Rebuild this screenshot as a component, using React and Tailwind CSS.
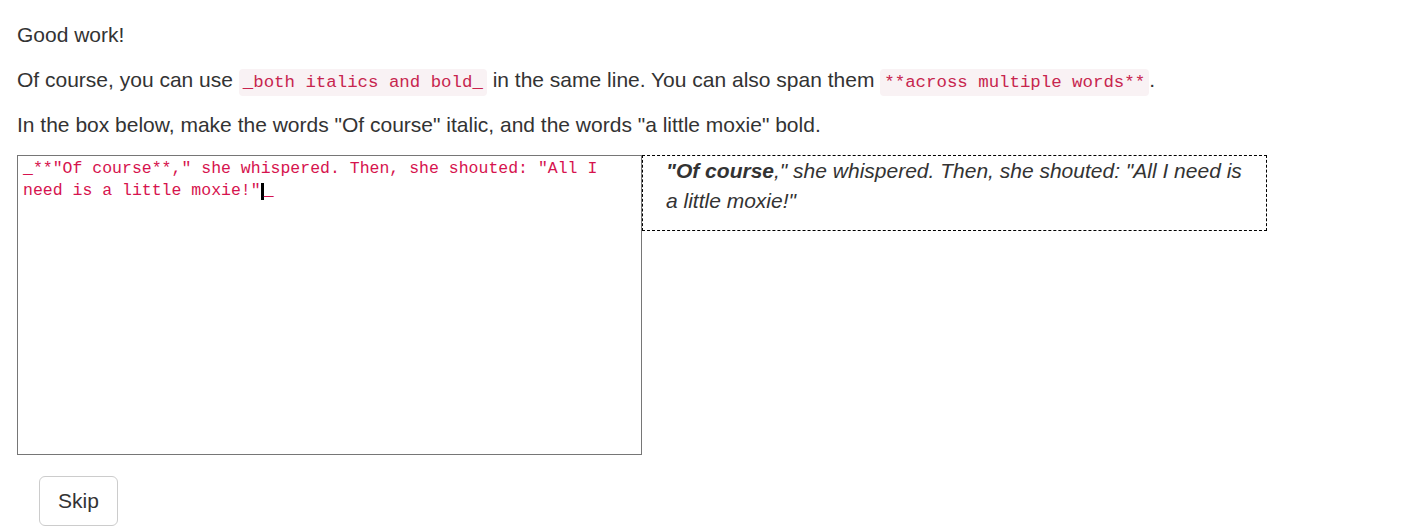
import React from 'react'

const Code = ({ children }) => (
  <code className="rounded-[4px] bg-[#f9f2f4] px-[4px] py-[4px] text-[17.4px] leading-none text-[#c7254e] [font-family:'Liberation_Mono',monospace]">
    {children}
  </code>
)

export default function App() {
  return (
    <div className="min-h-[531px] bg-white pl-[17px] pt-[21px] text-[21px] leading-[28px] text-[#333] [font-family:'Liberation_Sans',Arial,sans-serif]">
      <p className="mb-[17px]">Good work!</p>
      <p className="mb-[17px]">
        Of course, you can use <Code>_both italics and bold_</Code> in the same line. You can also span them{' '}
        <Code>**across multiple words**</Code>.
      </p>
      <p className="mb-[16px]">
        In the box below, make the words "Of course" italic, and the words "a little moxie" bold.
      </p>

      <div className="flex items-start">
        <div className="h-[300px] w-[625px] shrink-0 border border-[#767676] px-[5px] pt-[2px] text-[16.5px] leading-[22px] text-[#d6134e] [font-family:'Liberation_Mono',monospace]">
          <div>_**"Of course**," she whispered. Then, she shouted: "All I</div>
          <div className="flex items-end">
            <span>need is a little moxie!"</span>
            <span className="mb-[2px] inline-block h-[17px] w-[3px] bg-black"></span>
            <span>_</span>
          </div>
        </div>
        <div className="w-[625px] shrink-0 border border-dashed border-black pb-[14px] pl-[23px] pr-[16px] text-[21px] italic leading-[30px] text-[#333]">
          <strong className="font-bold">"Of course</strong>," she whispered. Then, she shouted: "All I need is a little moxie!"
        </div>
      </div>

      <div className="mt-[21px] pl-[22px]">
        <button className="h-[50px] rounded-[6px] border border-[#ccc] bg-white px-[18px] text-[21px] text-[#333]">
          Skip
        </button>
      </div>
    </div>
  )
}
